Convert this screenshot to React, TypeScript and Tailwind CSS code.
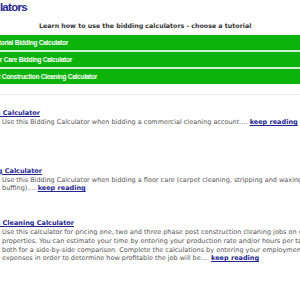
import React from 'react';

const navy = 'text-[#25258f]';

const ClippedEnd: React.FC<{ end: string; children: React.ReactNode }> = ({ end, children }) => (
  <div className={`flex shrink-0 justify-end ${end}`}>
    <span className="shrink-0 whitespace-nowrap">{children}</span>
  </div>
);

const KeepReading = () => (
  <a href="#" className={`font-bold underline ${navy}`}>keep reading</a>
);

const App: React.FC = () => {
  return (
    <div className="h-[300px] w-[300px] overflow-hidden bg-white font-['DejaVu_Sans',Verdana,sans-serif]">
      {/* page title, left part runs off the view */}
      <div className="flex h-[14px] items-center">
        <div className="flex w-[27px] shrink-0 justify-end">
          <h1 className={`shrink-0 whitespace-nowrap font-['Liberation_Sans',Arial,sans-serif] text-[11.5px] font-bold leading-[14px] tracking-[-0.7px] ${navy}`}>
            Bidding Calculators
          </h1>
        </div>
      </div>

      <p className="mt-[7px] whitespace-nowrap pl-[39px] text-[6.3px] font-bold leading-[9px] text-[#333]">
        Learn how to use the bidding calculators - choose a tutorial
      </p>

      {/* tutorial bars */}
      <div className="mt-[5px] flex flex-col gap-[2px] bg-[#d2f1d2] font-['Liberation_Sans',Arial,sans-serif] text-[6.5px] font-bold tracking-[-0.25px] text-white">
        <div className="flex h-[15px] items-center bg-[#0bb30b]">
          <ClippedEnd end="w-[68px]">Janitorial Bidding Calculator</ClippedEnd>
        </div>
        <div className="flex h-[15px] items-center bg-[#0bb30b]">
          <ClippedEnd end="w-[72px]">Floor Care Bidding Calculator</ClippedEnd>
        </div>
        <div className="flex h-[15px] items-center bg-[#0bb30b]">
          <ClippedEnd end="w-[97px]">Post Construction Cleaning Calculator</ClippedEnd>
        </div>
      </div>

      <div className="mt-[10px] border-t border-[#ececec]" />

      {/* tutorials */}
      <div className="mt-[14px] flex flex-col">
        <div className={`flex h-[9px] items-center text-[6.5px] font-bold leading-[9px] underline ${navy}`}>
          <ClippedEnd end="w-[40px]">Janitorial Bidding Calculator</ClippedEnd>
        </div>
        <p className="whitespace-nowrap pl-[2px] text-[6.5px] leading-[8.7px] text-[#555]">
          Use this Bidding Calculator when bidding a commercial cleaning account.... <KeepReading />
        </p>
      </div>

      <div className="mt-[40px] flex flex-col">
        <div className={`flex h-[9px] items-center text-[6.5px] font-bold leading-[9px] underline ${navy}`}>
          <ClippedEnd end="w-[42px]">Floor Care Bidding Calculator</ClippedEnd>
        </div>
        <p className="whitespace-nowrap pl-[2px] text-[6.5px] leading-[8.7px] text-[#555]">
          Use this Bidding Calculator when bidding a floor care (carpet cleaning, stripping and waxing, and
          <br />
          buffing).... <KeepReading />
        </p>
      </div>

      <div className="mt-[26px] flex flex-col">
        <div className={`flex h-[9px] items-center text-[6.5px] font-bold leading-[9px] underline ${navy}`}>
          <ClippedEnd end="w-[74px]">Post Construction Cleaning Calculator</ClippedEnd>
        </div>
        <p className="whitespace-nowrap pl-[2px] text-[6.5px] leading-[8.7px] text-[#555]">
          Use this calculator for pricing one, two and three phase post construction cleaning jobs on commercial
          <br />
          properties. You can estimate your time by entering your production rate and/or hours per task, or
          <br />
          both for a side-by-side comparison. Complete the calculations by entering your employment and supply
          <br />
          expenses in order to determine how profitable the job will be.... <KeepReading />
        </p>
      </div>
    </div>
  );
};

export default App;
